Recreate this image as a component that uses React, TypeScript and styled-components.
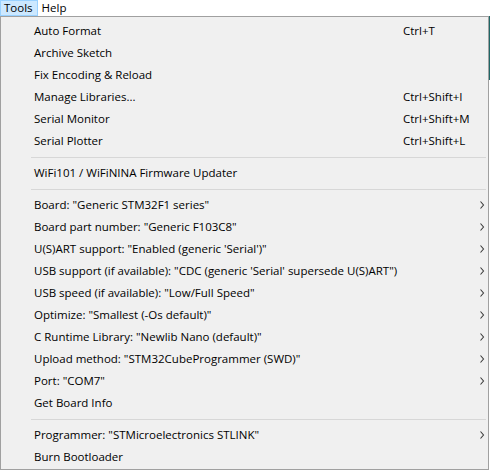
import React from "react";
import styled, { createGlobalStyle } from "styled-components";

const Global = createGlobalStyle`
  html, body { margin: 0; padding: 0; background: #ffffff; }
  body { font-family: "Open Sans", "Liberation Sans", Arial, sans-serif; font-size: 11.5px; color: #000; }
  * { box-sizing: border-box; }
`;

const Page = styled.div`
  width: 490px;
  height: 471px;
  display: flex;
  flex-direction: column;
  overflow: hidden;
  background: #ffffff;
`;

const MenuBar = styled.div`
  display: flex;
  height: 16px;
  align-items: stretch;
`;

const BarItem = styled.div<{ $active?: boolean }>`
  display: flex;
  align-items: center;
  height: 16px;
  padding: 0 4px 0 3px;
  border: 1px solid ${(p) => (p.$active ? "#99d1ff" : "transparent")};
  background: ${(p) => (p.$active ? "#cce8ff" : "transparent")};
  line-height: 14px;
`;

const Body = styled.div`
  display: flex;
  align-items: flex-start;
`;

const Popup = styled.div`
  width: 489px;
  height: 454px;
  border: 1px solid #a0a0a0;
  background: #f0f0f0;
  padding: 3px 0 0 0;
  display: flex;
  flex-direction: column;
`;

const EdgeStrip = styled.div`
  width: 1px;
  height: 64px;
  background: #1f6666;
`;

const Row = styled.div`
  display: grid;
  grid-template-columns: 369px 1fr 8px;
  align-items: center;
  height: 22px;
  padding: 0 3px 0 33px;
  white-space: nowrap;
`;

const Label = styled.span`
  line-height: 22px;
`;

const Shortcut = styled.span`
  line-height: 22px;
`;

const Arrow = styled.svg`
  display: block;
  width: 8px;
  height: 8px;
`;

const Separator = styled.div`
  height: 10px;
  margin: 0 2px 0 30px;
  display: flex;
  align-items: center;
  &::after {
    content: "";
    display: block;
    width: 100%;
    height: 1px;
    background: #d7d7d7;
  }
`;

type Item =
  | { kind: "sep" }
  | { kind: "item"; label: string; shortcut?: string; sub?: boolean };

const items: Item[] = [
  { kind: "item", label: "Auto Format", shortcut: "Ctrl+T" },
  { kind: "item", label: "Archive Sketch" },
  { kind: "item", label: "Fix Encoding & Reload" },
  { kind: "item", label: "Manage Libraries...", shortcut: "Ctrl+Shift+I" },
  { kind: "item", label: "Serial Monitor", shortcut: "Ctrl+Shift+M" },
  { kind: "item", label: "Serial Plotter", shortcut: "Ctrl+Shift+L" },
  { kind: "sep" },
  { kind: "item", label: "WiFi101 / WiFiNINA Firmware Updater" },
  { kind: "sep" },
  { kind: "item", label: 'Board: "Generic STM32F1 series"', sub: true },
  { kind: "item", label: 'Board part number: "Generic F103C8"', sub: true },
  { kind: "item", label: "U(S)ART support: \"Enabled (generic 'Serial')\"", sub: true },
  {
    kind: "item",
    label: "USB support (if available): \"CDC (generic 'Serial' supersede U(S)ART\")",
    sub: true,
  },
  { kind: "item", label: 'USB speed (if available): "Low/Full Speed"', sub: true },
  { kind: "item", label: 'Optimize: "Smallest (-Os default)"', sub: true },
  { kind: "item", label: 'C Runtime Library: "Newlib Nano (default)"', sub: true },
  { kind: "item", label: 'Upload method: "STM32CubeProgrammer (SWD)"', sub: true },
  { kind: "item", label: 'Port: "COM7"', sub: true },
  { kind: "item", label: "Get Board Info" },
  { kind: "sep" },
  { kind: "item", label: 'Programmer: "STMicroelectronics STLINK"', sub: true },
  { kind: "item", label: "Burn Bootloader" },
];

const SubArrow = () => (
  <Arrow viewBox="0 0 8 8">
    <path d="M3.5 0.5 L6.5 4 L3.5 7.5" fill="none" stroke="#3c3c3c" strokeWidth="1.1" />
  </Arrow>
);

export default function App() {
  return (
    <Page>
      <Global />
      <MenuBar>
        <BarItem $active>Tools</BarItem>
        <BarItem>Help</BarItem>
      </MenuBar>
      <Body>
        <Popup>
          {items.map((it, i) =>
            it.kind === "sep" ? (
              <Separator key={i} />
            ) : (
              <Row key={i}>
                <Label>{it.label}</Label>
                <Shortcut>{it.shortcut ?? ""}</Shortcut>
                {it.sub ? <SubArrow /> : <span />}
              </Row>
            )
          )}
        </Popup>
        <EdgeStrip />
      </Body>
    </Page>
  );
}
